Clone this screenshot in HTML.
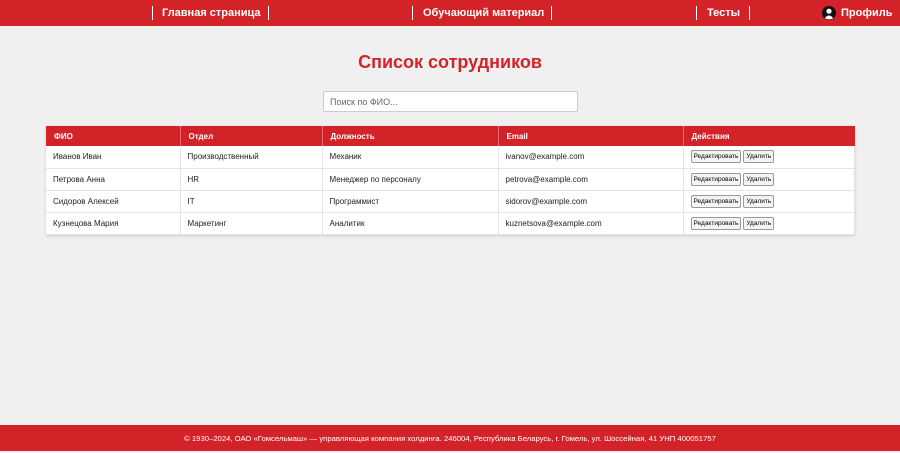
<!DOCTYPE html>
<html><head><meta charset="utf-8"><style>
*{margin:0;padding:0;box-sizing:border-box}
body{width:900px;height:451px;background:#f0f0f0;font-family:"Liberation Sans",sans-serif;position:relative;overflow:hidden}
.hdr{position:absolute;left:0;top:0;width:900px;height:26px;background:#d42229;color:#fff;font-weight:bold;font-size:11px}
.hdr span{position:absolute;top:7px;white-space:nowrap}
.sep{position:absolute;top:6px;width:1px;height:14px;background:#fff}
h1{position:absolute;top:52px;left:0;width:900px;text-align:center;color:#d42229;font-size:18px}
.search{position:absolute;left:323px;top:91px;width:255px;height:21px;background:#fff;border:1px solid #ccc;border-radius:2px;font-size:9px;color:#666;padding:5px 6px}
table{position:absolute;left:46px;top:126px;width:809px;border-collapse:collapse;background:#fff;font-size:8px;box-shadow:0 1px 3px rgba(0,0,0,.15)}
th{background:#d42229;color:#fff;text-align:left;height:20px;padding:0 8px;font-weight:bold;border-right:1px solid #e86a6e}
td{height:22px;padding:0 7px;border-bottom:1px solid #e4e4e4;border-right:1px solid #e4e4e4;color:#222}
button{font-family:"Liberation Sans",sans-serif;font-size:6.5px;background:#f4f4f4;border:1px solid #999;border-radius:2px;padding:2px 2px;margin-right:2px;vertical-align:middle}
.ftr{position:absolute;left:0;top:425px;width:900px;height:26px;background:#d42229;color:#fff;font-size:7.7px;text-align:center;line-height:28px}
</style></head><body>
<div class="hdr">
<div class="sep" style="left:152px"></div><span style="left:162px">Главная страница</span><div class="sep" style="left:268px"></div>
<div class="sep" style="left:412px"></div><span style="left:423px">Обучающий материал</span><div class="sep" style="left:551px"></div>
<div class="sep" style="left:696px"></div><span style="left:707px">Тесты</span><div class="sep" style="left:749px"></div>
<svg style="position:absolute;left:822px;top:6px" width="14" height="14" viewBox="0 0 14 14"><circle cx="7" cy="7" r="7" fill="#111"/><circle cx="7" cy="5.2" r="2.6" fill="#fff"/><path d="M2.8 12.2 Q7 6.8 11.2 12.2 Q7 14.5 2.8 12.2Z" fill="#fff"/></svg>
<span style="left:841px">Профиль</span>
</div>
<h1>Список сотрудников</h1>
<div class="search">Поиск по ФИО...</div>
<table>
<tr><th style="width:134px">ФИО</th><th style="width:142px">Отдел</th><th style="width:176px">Должность</th><th style="width:185px">Email</th><th style="border-right:none">Действия</th></tr>
<tr><td>Иванов Иван</td><td>Производственный</td><td>Механик</td><td>ivanov@example.com</td><td><button>Редактировать</button><button>Удалить</button></td></tr>
<tr><td>Петрова Анна</td><td>HR</td><td>Менеджер по персоналу</td><td>petrova@example.com</td><td><button>Редактировать</button><button>Удалить</button></td></tr>
<tr><td>Сидоров Алексей</td><td>IT</td><td>Программист</td><td>sidorov@example.com</td><td><button>Редактировать</button><button>Удалить</button></td></tr>
<tr><td>Кузнецова Мария</td><td>Маркетинг</td><td>Аналитик</td><td>kuznetsova@example.com</td><td><button>Редактировать</button><button>Удалить</button></td></tr>
</table>
<div class="ftr">© 1930–2024, ОАО «Гомсельмаш» — управляющая компания холдинга. 246004, Республика Беларусь, г. Гомель, ул. Шоссейная, 41 УНП 400051757</div>
</body></html>
